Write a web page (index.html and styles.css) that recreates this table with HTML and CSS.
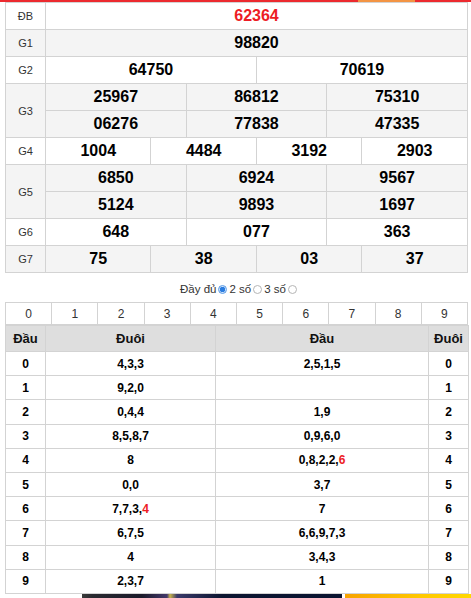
FILE: index.html
```html
<!DOCTYPE html>
<html lang="vi">
<head>
<meta charset="utf-8">
<title>Kết quả xổ số</title>
<link rel="stylesheet" href="styles.css">
</head>
<body>
<div class="topbar"></div>
<div class="wrap">
  <table class="kq">
    <colgroup>
      <col class="c-label">
      <col><col><col><col><col><col><col><col><col><col><col><col>
    </colgroup>
    <tbody>
      <tr>
        <td class="lbl">ĐB</td>
        <td colspan="12" class="db">62364</td>
      </tr>
      <tr class="alt">
        <td class="lbl">G1</td>
        <td colspan="12">98820</td>
      </tr>
      <tr>
        <td class="lbl">G2</td>
        <td colspan="6">64750</td>
        <td colspan="6">70619</td>
      </tr>
      <tr class="alt">
        <td class="lbl" rowspan="2">G3</td>
        <td colspan="4">25967</td>
        <td colspan="4">86812</td>
        <td colspan="4">75310</td>
      </tr>
      <tr class="alt">
        <td colspan="4">06276</td>
        <td colspan="4">77838</td>
        <td colspan="4">47335</td>
      </tr>
      <tr>
        <td class="lbl">G4</td>
        <td colspan="3">1004</td>
        <td colspan="3">4484</td>
        <td colspan="3">3192</td>
        <td colspan="3">2903</td>
      </tr>
      <tr class="alt">
        <td class="lbl" rowspan="2">G5</td>
        <td colspan="4">6850</td>
        <td colspan="4">6924</td>
        <td colspan="4">9567</td>
      </tr>
      <tr class="alt">
        <td colspan="4">5124</td>
        <td colspan="4">9893</td>
        <td colspan="4">1697</td>
      </tr>
      <tr>
        <td class="lbl">G6</td>
        <td colspan="4">648</td>
        <td colspan="4">077</td>
        <td colspan="4">363</td>
      </tr>
      <tr class="alt">
        <td class="lbl">G7</td>
        <td colspan="3">75</td>
        <td colspan="3">38</td>
        <td colspan="3">03</td>
        <td colspan="3">37</td>
      </tr>
    </tbody>
  </table>

  <div class="options">
    <span>Đầy đủ</span><span class="radio on"></span>
    <span>2 số</span><span class="radio"></span>
    <span>3 số</span><span class="radio"></span>
  </div>

  <table class="nums">
    <tr>
      <td>0</td><td>1</td><td>2</td><td>3</td><td>4</td><td>5</td><td>6</td><td>7</td><td>8</td><td>9</td>
    </tr>
  </table>

  <table class="loto">
    <colgroup>
      <col class="c-head"><col class="c-tail"><col class="c-head2"><col class="c-head">
    </colgroup>
    <thead>
      <tr><th>Đầu</th><th>Đuôi</th><th>Đầu</th><th>Đuôi</th></tr>
    </thead>
    <tbody>
      <tr><td>0</td><td>4,3,3</td><td>2,5,1,5</td><td>0</td></tr>
      <tr><td>1</td><td>9,2,0</td><td></td><td>1</td></tr>
      <tr><td>2</td><td>0,4,4</td><td>1,9</td><td>2</td></tr>
      <tr><td>3</td><td>8,5,8,7</td><td>0,9,6,0</td><td>3</td></tr>
      <tr><td>4</td><td>8</td><td>0,8,2,2,<span class="red">6</span></td><td>4</td></tr>
      <tr><td>5</td><td>0,0</td><td>3,7</td><td>5</td></tr>
      <tr><td>6</td><td>7,7,3,<span class="red">4</span></td><td>7</td><td>6</td></tr>
      <tr><td>7</td><td>6,7,5</td><td>6,6,9,7,3</td><td>7</td></tr>
      <tr><td>8</td><td>4</td><td>3,4,3</td><td>8</td></tr>
      <tr><td>9</td><td>2,3,7</td><td>1</td><td>9</td></tr>
    </tbody>
  </table>
</div>
<div class="ads">
  <div class="ad ad-dark"></div>
  <div class="ad ad-yellow"></div>
</div>
</body>
</html>
```

FILE: styles.css
```css
html, body {
  margin: 0;
  padding: 0;
  background: #fff;
}

body {
  font-family: "Liberation Sans", Arial, sans-serif;
  color: #000;
}

.topbar {
  height: 2px;
  background: linear-gradient(to right, #ec2a2f 0, #ec2a2f 358px, #f39444 358px, #f39444 415px, #ec2a2f 415px);
}

.wrap {
  margin: 0 3px 0 5px;
}

table {
  border-collapse: collapse;
  table-layout: fixed;
  width: 463px;
}

.kq .c-label {
  width: 40px;
}

.kq td {
  border: 1px solid #d3d3d3;
  height: 26px;
  padding: 0;
  text-align: center;
  vertical-align: middle;
  font-size: 16px;
  font-weight: bold;
  line-height: 18px;
}

.kq tr.alt td {
  background: #f4f4f4;
}

.kq td.lbl {
  font-size: 11px;
  font-weight: normal;
  color: #333;
}

.kq td.db {
  color: #ed1c24;
}

.options {
  padding: 8px 0 5px 6px;
  line-height: 16px;
  font-size: 11.5px;
  color: #333;
  display: flex;
  justify-content: center;
  align-items: center;
}

.radio {
  display: inline-block;
  width: 9px;
  height: 9px;
  border: 1px solid #b5b5b5;
  border-radius: 50%;
  margin: 0 2px 0 2px;
  box-sizing: border-box;
  background: #fff;
}

.radio.on {
  border: 1px solid #5a9be6;
  background: radial-gradient(circle, #2b7de0 0, #2b7de0 2.5px, #cfe2fa 3px);
}

.nums td {
  border: 1px solid #d3d3d3;
  height: 21px;
  padding: 0;
  text-align: center;
  font-size: 12px;
  color: #333;
}

.loto .c-head {
  width: 40px;
}

.loto .c-tail {
  width: 170px;
}

.loto .c-head2 {
  width: 213px;
}

.loto th {
  background: #dedede;
  border: 1px solid #d3d3d3;
  height: 25px;
  padding: 0;
  font-size: 13px;
  font-weight: bold;
  color: #111;
}

.loto td {
  border: 1px solid #d3d3d3;
  height: 23.2px;
  padding: 0;
  text-align: center;
  font-size: 12px;
  font-weight: bold;
}

.loto .red {
  color: #ed1c24;
}

.ads {
  display: flex;
  gap: 3px;
  padding-left: 82px;
}

.ad {
  height: 40px;
}

.ad-dark {
  width: 260px;
  background: linear-gradient(to right, #3a3a3a 0, #2a2a30 10px, #1a1a2a 60px, #43386a 85px, #c8b44a 88px, #3a3a6a 95px, #0c1530 140px, #0a1430 260px);
}

.ad-yellow {
  flex: 1;
  background: linear-gradient(to right, #f7a300, #ffc800 60%, #ffd800);
}
```
